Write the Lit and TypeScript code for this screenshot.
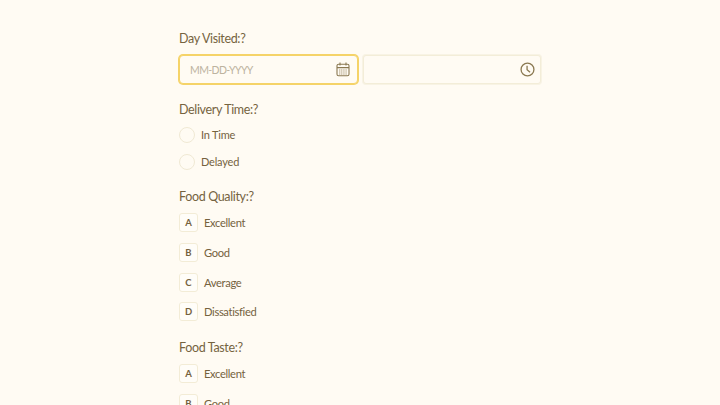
import { LitElement, html, css } from "lit";
import { customElement } from "lit/decorators.js";

const calendar = html`<svg class="ico" viewBox="0 0 14 15" width="14" height="15" fill="none" stroke="#8a7850" stroke-width="1.1">
  <rect x="1" y="2.2" width="12" height="11.6" rx="1.6"></rect>
  <path d="M1 5.6H13M4 .6V3.4M10 .6V3.4"></path>
  <path d="M3 8H11M3 10H11M3 12H11" stroke-width="1" stroke-dasharray="1.2 .6" opacity=".7"></path>
</svg>`;
const clock = html`<svg class="ico" viewBox="0 0 14 14" width="15" height="15" fill="none" stroke="#8a7850" stroke-width="1.2">
  <circle cx="7" cy="7" r="6"></circle>
  <path d="M6.6 3.4V7.2L9.4 9.6"></path>
</svg>`;

@customElement("app-root")
export class AppRoot extends LitElement {
  static styles = css`
    :host { display: block; height: 405px; overflow: hidden; background: #fffbf3; font-family: "Lato", "Noto Sans", sans-serif; color: #75623e; font-variant-ligatures: none; }
    .form { width: 362px; margin-left: 179px; padding-top: 29px; display: flex; flex-direction: column; }
    .q { font-size: 12.5px; line-height: 18px; letter-spacing: -.35px; color: #75633f; position: relative; top: 0.5px; }
    .dates { display: flex; gap: 5px; margin-top: 8px; }
    .field { flex: 1; height: 29px; box-sizing: border-box; border: 1px solid #f3edd8; border-radius: 3px; display: flex; align-items: center; justify-content: space-between; padding: 0 5px 0 10px; background: #fffbf3; box-shadow: 0 0 0 1px #f8f3e4; }
    .field.focus { box-shadow: 0 0 0 1px #f5d368; border: 1px solid #f5d368; border-radius: 4px; padding-right: 7px; flex: none; width: 179px; }
    .field .ico:only-child { margin-left: auto; }
    .ph { font-size: 10.5px; color: #bdb39f; letter-spacing: -.6px; }
    .radios { display: flex; flex-direction: column; gap: 11px; margin-top: 9px; margin-bottom: 17px; }
    .radio { display: flex; align-items: center; gap: 5px; font-size: 11px; line-height: 16px; height: 16px; letter-spacing: -.2px; }
    .radio span { margin-left: 1px; }
    .dot { width: 16px; height: 16px; border-radius: 50%; border: 1px solid #f0e9d4; box-sizing: border-box; flex: none; }
    .opts { display: flex; flex-direction: column; gap: 10.8px; margin-top: 8px; margin-bottom: 17px; }
    .opt { display: flex; align-items: center; gap: 6px; font-size: 11.2px; height: 19px; letter-spacing: -.35px; }
    .key { width: 19px; height: 19px; box-sizing: border-box; border: 1px solid #f3ecd6; border-radius: 3px; display: flex; align-items: center; justify-content: center; font-size: 9.5px; font-weight: 700; letter-spacing: 0; background: #fffdf8; }
  `;

  private options(items: string[]) {
    return html`<div class="opts">
      ${items.map((t, i) => html`<div class="opt"><div class="key">${"ABCD"[i]}</div><span>${t}</span></div>`)}
    </div>`;
  }

  render() {
    const all = ["Excellent", "Good", "Average", "Dissatisfied"];
    return html`<div class="form">
      <div class="q">Day Visited:?</div>
      <div class="dates">
        <div class="field focus"><span class="ph">MM-DD-YYYY</span>${calendar}</div>
        <div class="field">${clock}</div>
      </div>
      <div class="q" style="margin-top:16px">Delivery Time:?</div>
      <div class="radios">
        <div class="radio"><div class="dot"></div><span>In Time</span></div>
        <div class="radio"><div class="dot"></div><span>Delayed</span></div>
      </div>
      <div class="q">Food Quality:?</div>
      ${this.options(all)}
      <div class="q">Food Taste:?</div>
      ${this.options(all)}
    </div>`;
  }
}
